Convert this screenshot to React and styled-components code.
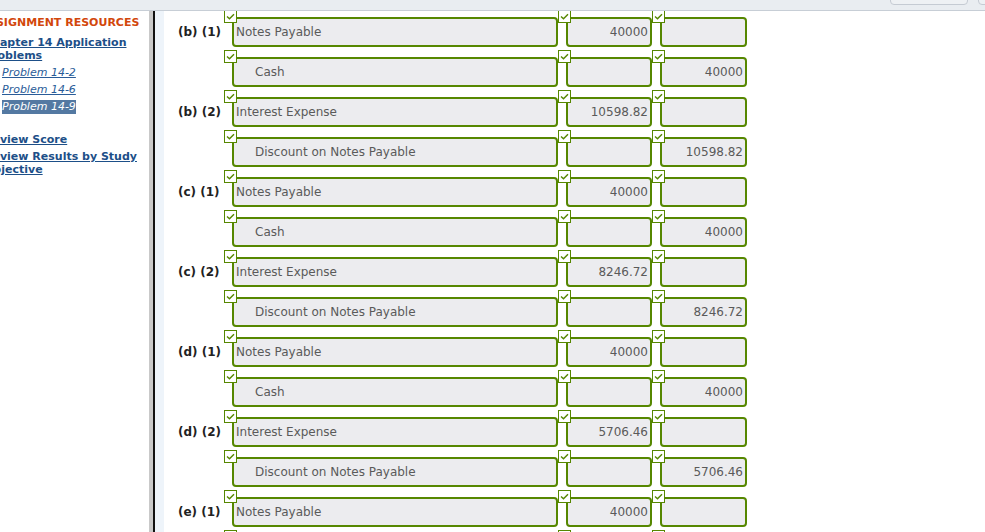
import React from "react";
import styled, { createGlobalStyle } from "styled-components";

const Global = createGlobalStyle`
  html, body { margin: 0; padding: 0; overflow: hidden; background: #fff; }
  body { font-family: "DejaVu Sans", Verdana, sans-serif; }
  * { box-sizing: border-box; }
`;

const Page = styled.div`
  width: 985px;
  height: 532px;
  overflow: hidden;
  display: flex;
  flex-direction: column;
`;

const TopBar = styled.div`
  position: relative;
  z-index: 2;
  flex: none;
  height: 11px;
  background: #e9edf1;
  border-bottom: 1px solid #c7ced6;
  display: flex;
  gap: 10px;
  padding-left: 890px;
  overflow: hidden;
`;

const BarButton = styled.div`
  flex: none;
  width: ${(p) => p.$w}px;
  height: 20px;
  margin-top: -15px;
  border: 1px solid #c5cbd3;
  border-radius: 4px;
  background: #eef1f4;
`;

const Body = styled.div`
  flex: 1;
  display: flex;
  min-height: 0;
`;

const Sidebar = styled.div`
  flex: none;
  width: 149px;
  overflow: hidden;
  font-size: 11px;
`;

const SideInner = styled.div`
  margin-left: -16px;
  width: 165px;
  padding-top: 5px;
`;

const Heading = styled.div`
  margin-left: -4px;
  white-space: nowrap;
  font-weight: bold;
  color: #d2470c;
  line-height: 14px;
`;

const SideLink = styled.a`
  display: block;
  margin-top: ${(p) => p.$mt}px;
  line-height: 13px;
  font-weight: bold;
  color: #1d4f88;
  text-decoration: underline;
`;

const ProblemList = styled.div`
  margin-top: 2px;
  padding-left: 18px;
`;

const ProblemItem = styled.div`
  line-height: 17px;
  font-style: italic;
  white-space: nowrap;
`;

const ProblemLink = styled.a`
  color: ${(p) => (p.$active ? "#ffffff" : "#2a5c98")};
  background: ${(p) => (p.$active ? "#5479a2" : "transparent")};
  text-decoration: ${(p) => (p.$active ? "none" : "underline")};
  padding-bottom: ${(p) => (p.$active ? "1px" : "0")};
`;

const Divider = styled.div`
  flex: none;
  display: flex;
`;

const DividerPart = styled.div`
  width: ${(p) => p.$w}px;
  background: ${(p) => p.$c};
`;

const Main = styled.div`
  flex: 1;
  margin-top: -1px;
  padding-left: 14px;
  display: flex;
  flex-direction: column;
  gap: 3px;
`;

const Row = styled.div`
  display: flex;
  flex: none;
`;

const Label = styled.div`
  flex: none;
  width: 46px;
  padding-top: 7px;
  height: 37px;
  display: flex;
  align-items: center;
  font-size: 12px;
  font-weight: bold;
  color: #222;
  white-space: nowrap;
`;

const Cell = styled.div`
  position: relative;
  flex: none;
  width: ${(p) => p.$w}px;
  padding: 7px 0 0 8px;
`;

const Check = styled.span`
  position: absolute;
  left: 0;
  top: 0;
  width: 13px;
  height: 13px;
  background: #fff;
  border: 1px solid #568700;
  display: flex;
  align-items: center;
  justify-content: center;
  z-index: 1;
`;

const Field = styled.input`
  display: block;
  width: 100%;
  height: 30px;
  margin: 0;
  border: 2px solid #568700;
  border-radius: 4px;
  background: #ececef;
  font-family: "DejaVu Sans", Verdana, sans-serif;
  font-size: 12px;
  color: #5a5a5a;
  padding: 0 ${(p) => (p.$right ? "2px" : "0")} 0
    ${(p) => (p.$indent ? "21px" : "2px")};
  text-align: ${(p) => (p.$right ? "right" : "left")};
  outline: none;
`;

const Tick = () => (
  <svg width="9" height="7" viewBox="0 0 9 7">
    <polyline points="1,3.5 3.5,5.8 8,1.2" fill="none" stroke="#568700" strokeWidth="1.4" />
  </svg>
);

const entries = [
  ["(b) (1)", "Notes Payable", "40000", "Cash", "40000"],
  ["(b) (2)", "Interest Expense", "10598.82", "Discount on Notes Payable", "10598.82"],
  ["(c) (1)", "Notes Payable", "40000", "Cash", "40000"],
  ["(c) (2)", "Interest Expense", "8246.72", "Discount on Notes Payable", "8246.72"],
  ["(d) (1)", "Notes Payable", "40000", "Cash", "40000"],
  ["(d) (2)", "Interest Expense", "5706.46", "Discount on Notes Payable", "5706.46"],
  ["(e) (1)", "Notes Payable", "40000", "Cash", "40000"],
];

const JournalRow = ({ label, account, debit, credit, indent }) => (
  <Row>
    <Label>{label}</Label>
    <Cell $w={334}>
      <Check><Tick /></Check>
      <Field readOnly value={account} $indent={indent} />
    </Cell>
    <Cell $w={94}>
      <Check><Tick /></Check>
      <Field readOnly value={debit} $right />
    </Cell>
    <Cell $w={95}>
      <Check><Tick /></Check>
      <Field readOnly value={credit} $right />
    </Cell>
  </Row>
);

export default function App() {
  return (
    <Page>
      <Global />
      <TopBar>
        <BarButton $w={78} />
        <BarButton $w={30} />
      </TopBar>
      <Body>
        <Sidebar>
          <SideInner>
            <Heading>ASSIGNMENT RESOURCES</Heading>
            <SideLink $mt={6}>Chapter 14 Application Problems</SideLink>
            <ProblemList>
              <ProblemItem><ProblemLink>Problem 14-2</ProblemLink></ProblemItem>
              <ProblemItem><ProblemLink>Problem 14-6</ProblemLink></ProblemItem>
              <ProblemItem><ProblemLink $active>Problem 14-9</ProblemLink></ProblemItem>
            </ProblemList>
            <SideLink $mt={18}>Review Score</SideLink>
            <SideLink $mt={4}>Review Results by Study Objective</SideLink>
          </SideInner>
        </Sidebar>
        <Divider>
          <DividerPart $w={4} $c="#c9c9c9" />
          <DividerPart $w={2} $c="#111" />
          <DividerPart $w={9} $c="#eef4fa" />
        </Divider>
        <Main>
          {entries.map(([label, acc1, amt1, acc2, amt2]) => (
            <React.Fragment key={label}>
              <JournalRow label={label} account={acc1} debit={amt1} credit="" />
              <JournalRow label="" account={acc2} debit="" credit={amt2} indent />
            </React.Fragment>
          ))}
        </Main>
      </Body>
    </Page>
  );
}
